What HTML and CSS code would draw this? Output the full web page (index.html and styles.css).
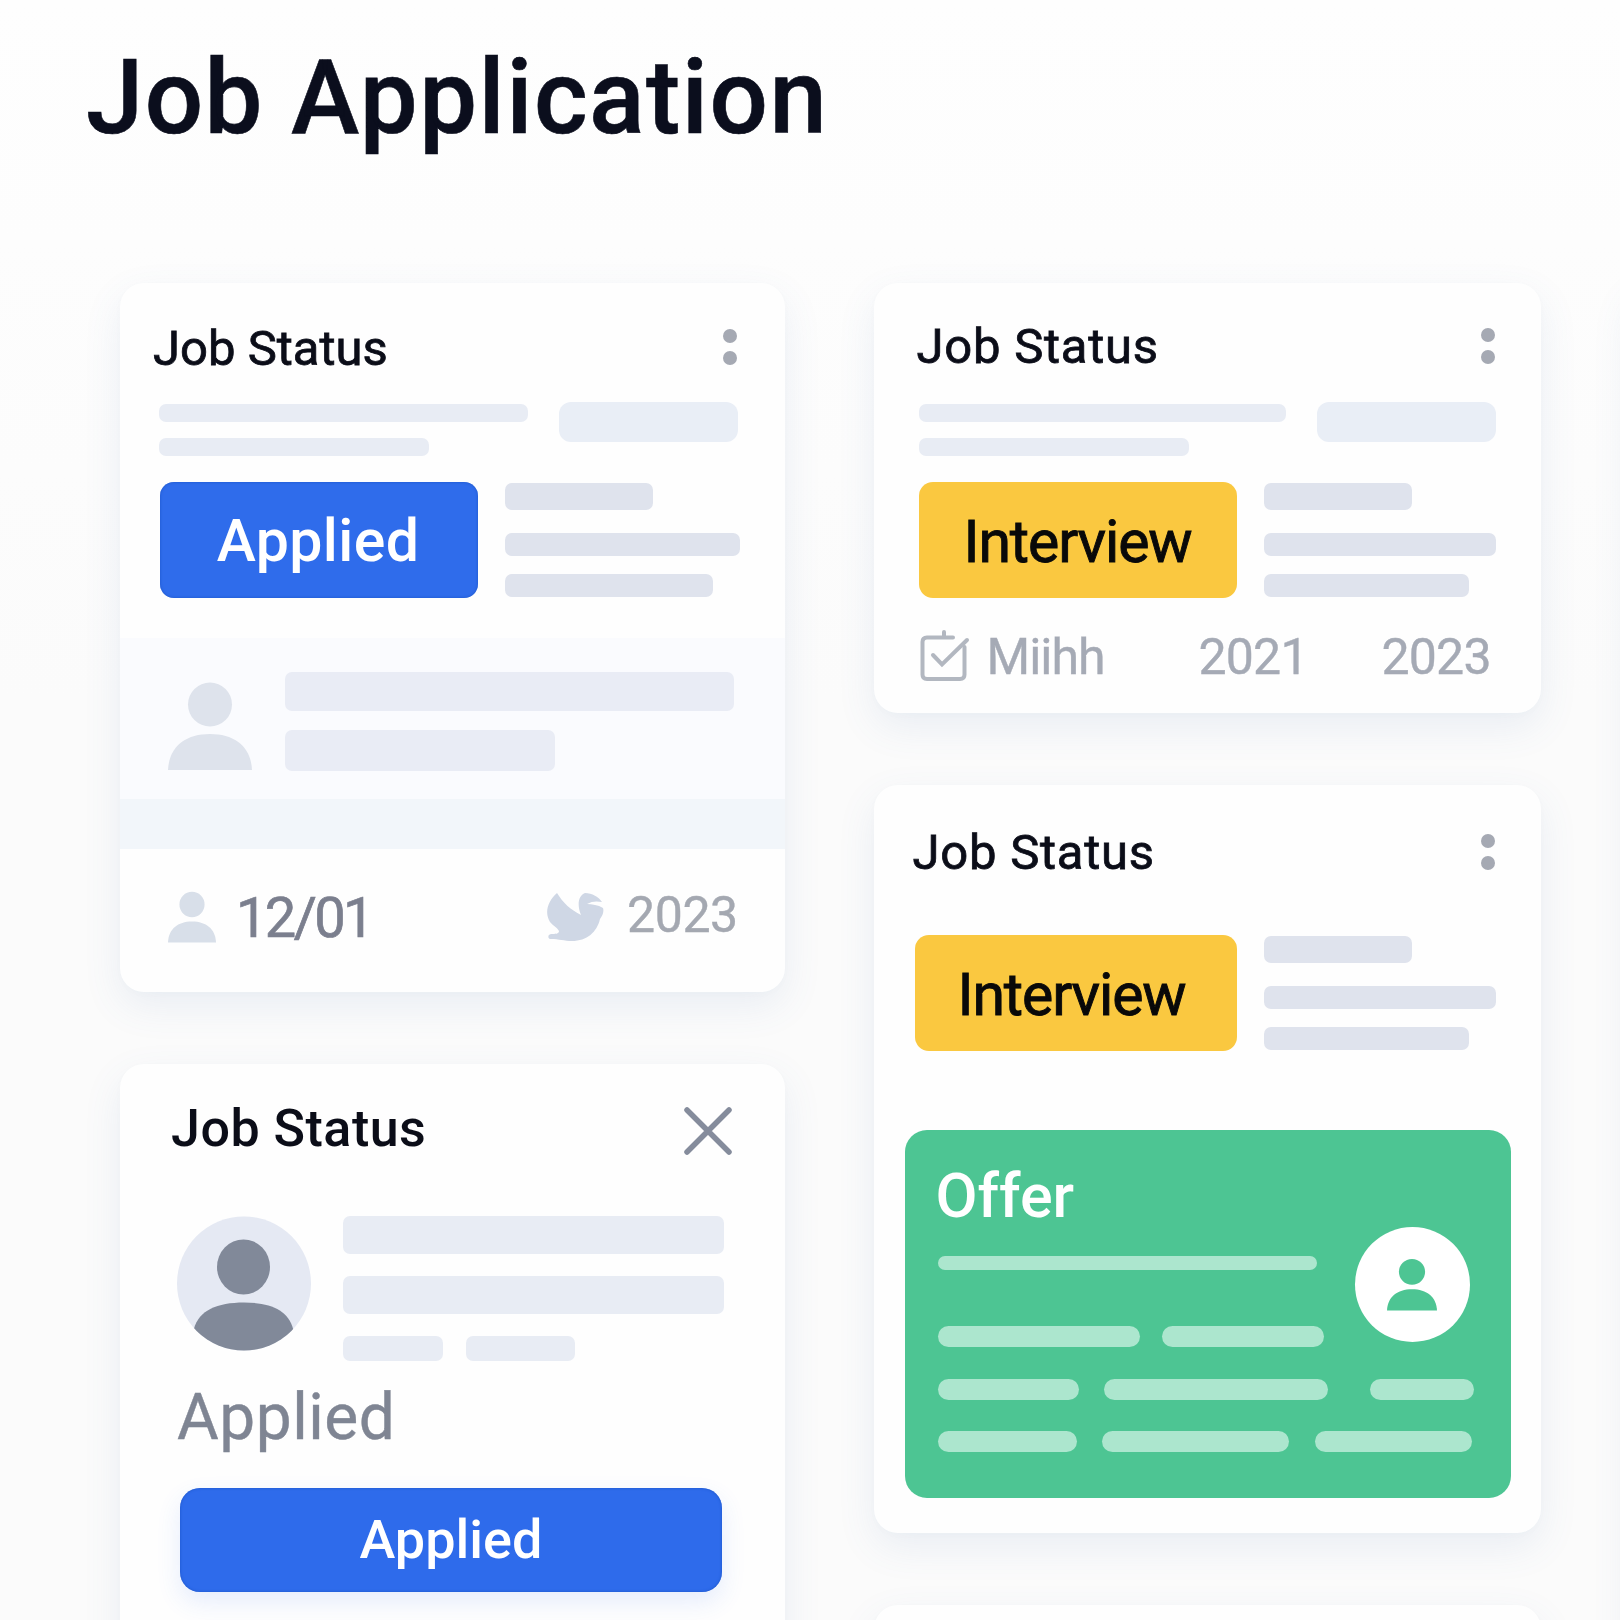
FILE: index.html
```html
<!DOCTYPE html>
<html lang="en">
<head>
<meta charset="utf-8">
<title>Job Application</title>
<link rel="stylesheet" href="styles.css">
</head>
<body>
<svg class="defs" aria-hidden="true">
  <symbol id="person" viewBox="0 0 84 90" preserveAspectRatio="none"><circle cx="42" cy="23.500" r="22"/><path d="M0 89C1 66 17 53 42 53s41 13 42 36z"/></symbol>
</svg>
<main class="page">
  <h1 class="page-title">Job Application</h1>
  <div class="board">
    <div class="column">
      <article class="card card-profile">
        <header class="card-head"><h2>Job Status</h2><span class="dots"><i></i><i></i></span></header>
        <div class="summary">
          <div class="summary-lines"><span class="bar line-long"></span><span class="bar line-short"></span></div>
          <span class="chip"></span>
        </div>
        <div class="status">
          <span class="badge badge-blue">Applied</span>
          <div class="meta"><span class="bar"></span><span class="bar"></span><span class="bar"></span></div>
        </div>
        <div class="contact">
          <svg class="contact-icon"><use href="#person"/></svg>
          <div class="contact-lines"><span class="bar"></span><span class="bar"></span></div>
        </div>
        <div class="strip"></div>
        <footer class="dates">
          <svg class="small-person"><use href="#person"/></svg>
          <span class="date">12/01</span>
          <svg class="bird" viewBox="0 0 58 50"><path d="M11 1C2 9-2 20 4 30c3 4 7 5 9 9 0 3-4 3-8 3-4 1-3 5 0 5 8 0 13 2 21 2 15 0 25-9 28-22 3-4 4-8 3-11-5-3-11-4-16-4 5-3 10-3 15-2C53 5 46 1 39 1c-7 3-8 12-4 22C25 18 17 11 11 1z"/></svg>
          <span class="year">2023</span>
        </footer>
      </article>

      <article class="card card-applied">
        <header class="card-head"><h2>Job Status</h2>
          <svg class="close" viewBox="0 0 50 50"><path d="M4 4l42 42M46 4L4 46"/></svg></header>
        <div class="profile">
          <svg class="avatar" viewBox="0 0 134 134"><clipPath id="round"><circle cx="67" cy="67" r="67"/></clipPath><circle class="disc" cx="67" cy="67" r="67"/><g clip-path="url(#round)"><ellipse cx="66.500" cy="50.500" rx="26.500" ry="27.500"/><path d="M17 112c5-18 23-26 50-26s44 8 49 26v30H17z"/></g></svg>
          <div class="profile-lines"><span class="bar"></span><span class="bar"></span><div class="tags"><span class="bar"></span><span class="bar"></span></div></div>
        </div>
        <p class="state">Applied</p>
        <button class="action">Applied</button>
      </article>
    </div>

    <div class="column">
      <article class="card card-interview">
        <header class="card-head"><h2>Job Status</h2><span class="dots"><i></i><i></i></span></header>
        <div class="summary">
          <div class="summary-lines"><span class="bar line-long"></span><span class="bar line-short"></span></div>
          <span class="chip"></span>
        </div>
        <div class="status">
          <span class="badge badge-yellow">Interview</span>
          <div class="meta"><span class="bar"></span><span class="bar"></span><span class="bar"></span></div>
        </div>
        <footer class="history">
          <svg class="check" viewBox="0 0 50 52"><path d="M33 7.500H7q-4.500 0-4.500 4.500v32.500Q2.500 49 7 49h33q4.500 0 4.500-4.500V17M24 6V2"/><path d="M13 25l9 9.500L47 10"/></svg>
          <span class="name">Miihh</span><span class="from">2021</span><span class="to">2023</span>
        </footer>
      </article>

      <article class="card card-offer">
        <header class="card-head"><h2>Job Status</h2><span class="dots"><i></i><i></i></span></header>
        <div class="status">
          <span class="badge badge-yellow">Interview</span>
          <div class="meta"><span class="bar"></span><span class="bar"></span><span class="bar"></span></div>
        </div>
        <section class="offer">
          <h3>Offer</h3>
          <div class="offer-top">
            <div class="offer-lines"><span class="tick thin"></span><div class="ticks row-a"><span class="tick"></span><span class="tick"></span></div></div>
            <span class="offer-avatar"><svg><use href="#person"/></svg></span>
          </div>
          <div class="ticks row-b"><span class="tick"></span><span class="tick"></span><span class="tick"></span></div>
          <div class="ticks row-c"><span class="tick"></span><span class="tick"></span><span class="tick"></span></div>
        </section>
      </article>
      <article class="card card-next"></article>
    </div>

    <div class="column"><article class="card card-side"></article></div>
  </div>
</main>
</body>
</html>
```
FILE: styles.css
```css
* { box-sizing: border-box; }
body { margin: 0; background: #fdfdfd; font-family: Roboto, "Liberation Sans", sans-serif; color: #0b0d18; }
h1, h2, h3, p { margin: 0; font-weight: 500; white-space: nowrap; }
svg { display: block; flex: none; }
.defs { width: 0; height: 0; position: absolute; }
.page { width: 1620px; height: 1620px; overflow: hidden; background: linear-gradient(#fefefe 0, #fdfdfd 240px, #fbfbfb 700px, #fbfbfb 100%); }
.page-title { padding: 38px 0 0 86px; height: 283px; font-size: 103px; line-height: 120px; letter-spacing: 1.450px; color: #0b0e1d; -webkit-text-stroke: .6px currentColor; }

.board { display: grid; grid-template-columns: 665px 667px 665px; column-gap: 88.500px; padding-left: 120px; }
.column { display: flex; flex-direction: column; gap: 72px; }
.card { flex: none; background: #fefefe; border-radius: 24px; box-shadow: 0 14px 38px rgba(80, 120, 175, .1), 0 2px 8px rgba(80, 110, 150, .015); }

.card-head { display: flex; align-items: center; justify-content: space-between; height: 60px; }
.card-head h2 { padding-top: 2px; font-size: 49px; line-height: 60px; font-weight: 400; -webkit-text-stroke: .8px currentColor; }
.dots { display: flex; flex-direction: column; gap: 8px; }
.dots i { width: 14px; height: 14px; border-radius: 50%; background: #a5a9b3; }

.bar { display: block; background: #e8ecf4; border-radius: 7px; }
.summary { display: flex; justify-content: space-between; height: 40px; }
.summary-lines { padding-top: 2px; }
.line-long { width: 369px; height: 18px; }
.line-short { width: 270px; height: 18px; margin-top: 16px; }
.chip { width: 179px; height: 40px; border-radius: 12px; background: #e9eef6; }

.status { display: flex; height: 116px; }
.badge { display: flex; align-items: center; justify-content: center; width: 318px; height: 116px; border-radius: 14px; font-size: 59px; }
.badge-blue { padding-right: 2px; background: #2f6ceb; color: #fff; font-weight: 500; letter-spacing: .4px; box-shadow: inset 0 0 3px #1c54c5; }
.badge-yellow { padding-top: 2px; background: #fac840; color: #090909; letter-spacing: -1.150px; -webkit-text-stroke: .9px currentColor; }
.meta { padding-top: 1px; margin-left: 27px; }
.meta .bar { background: #dfe3ed; }
.meta .bar:nth-child(1) { width: 148px; height: 27px; }
.meta .bar:nth-child(2) { width: 235px; height: 23px; margin-top: 23px; }
.meta .bar:nth-child(3) { width: 208px; height: 23px; margin-top: 18px; }

.card-profile { height: 709px; padding-top: 35px; }
.card-profile .card-head { padding: 0 48px 0 33px; margin-bottom: 24px; }
.card-profile .dots { margin-top: -3px; }
.card-profile .summary { padding: 0 47px 0 39px; margin-bottom: 40px; }
.card-profile .status { padding-left: 40px; margin-bottom: 40px; }
.contact { display: flex; height: 161px; padding: 34px 0 0 48px; background: #fafbfe; }
.contact-icon { width: 84px; height: 90px; margin-top: 9px; fill: #dee3ec; }
.contact-lines { margin-left: 33px; }
.contact-lines .bar { width: 449px; height: 39px; background: #e9ecf5; }
.contact-lines .bar + .bar { width: 270px; height: 41px; margin-top: 19px; }
.strip { height: 50px; background: #f2f6fa; }
.dates { display: flex; align-items: center; padding: 38px 0 0 48px; color: #a4a8b1; }
.small-person { width: 48px; height: 52px; fill: #d8dfe9; }
.date { width: 310px; margin-left: 20px; padding-top: 3px; font-size: 56px; line-height: 56px; letter-spacing: -2.600px; color: #7b7f8e; -webkit-text-stroke: .7px currentColor; }
.bird { width: 58px; height: 50px; fill: #cfd7e5; }
.year { margin: -4px 0 0 23px; font-size: 50px; line-height: 50px; letter-spacing: -.400px; -webkit-text-stroke: .4px currentColor; }

.card-applied { height: 650px; padding-top: 34px; }
.card-applied .card-head { padding: 0 52px 0 51px; }
.card-applied h2 { padding-top: 1px; font-size: 52px; font-weight: 500; letter-spacing: .500px; -webkit-text-stroke: 0; }
.close { width: 50px; height: 50px; margin-top: 5px; fill: none; stroke: #858c9c; stroke-width: 5.500; stroke-linecap: round; }
.profile { display: flex; height: 145px; margin: 58px 0 0 57px; }
.avatar { width: 134px; height: 135px; fill: #818999; }
.disc { fill: #e5e9f3; }
.profile-lines { margin-left: 32px; }
.profile-lines .bar { width: 381px; height: 38px; margin-bottom: 22px; }
.tags { display: flex; gap: 23px; }
.tags .bar { width: 100px; height: 25px; }
.tags .bar + .bar { width: 109px; }
.state { height: 107px; margin: 20px 0 0 57px; font-size: 64px; line-height: 74px; font-weight: 400; letter-spacing: .500px; color: #7f8593; -webkit-text-stroke: .4px currentColor; }
.action { display: block; width: 542px; height: 104px; margin: 0 0 0 60px; padding: 0 0 2px; border: 0; border-radius: 20px; background: #2e6beb; color: #fff; font: 500 54px Roboto, sans-serif; box-shadow: inset 0 0 3px #1c54c5, 0 10px 24px rgba(47, 108, 235, .12); }

.column:nth-child(2) h2 { letter-spacing: .750px; }
.column:nth-child(2) .meta .bar:nth-child(2) { width: 232px; }
.column:nth-child(2) .meta .bar:nth-child(3) { width: 205px; }
.card-interview { height: 430px; padding-top: 33px; }
.card-interview .card-head { padding: 0 46px 0 43px; margin-bottom: 26px; }
.card-interview .summary { padding: 0 45px 0 45px; margin-bottom: 40px; }
.card-interview .line-long { width: 367px; }
.card-interview .status { padding-left: 45px; }
.history { display: flex; align-items: center; padding: 31px 0 0 46px; color: #a5aab5; font-size: 50px; line-height: 52px; letter-spacing: -.800px; -webkit-text-stroke: .4px currentColor; }
.history span { padding-top: 2px; }
.check { width: 50px; height: 52px; fill: none; stroke: #b2b7c0; stroke-width: 4; stroke-linecap: round; }
.name { width: 212px; margin-left: 17px; letter-spacing: -1px; }
.from { width: 183px; }

.card-offer { height: 748px; padding-top: 37px; }
.card-offer .card-head { padding: 0 46px 0 39px; margin-bottom: 53px; }
.card-offer .status { padding-left: 41px; }
.card-offer .badge { width: 322px; padding-right: 8px; }
.offer { width: 606px; height: 368px; margin: 79px 0 0 31px; padding: 29px 0 0 33px; border-radius: 22px; background: #4dc593; color: #fff; }
.offer h3 { height: 67px; padding-top: 2px; font-size: 61px; line-height: 70px; margin-left: -2px; }
.offer-top { display: flex; height: 153px; padding-top: 1px; }
.offer-lines { width: 436px; padding-top: 29px; }
.offer-avatar { display: flex; justify-content: center; width: 115px; height: 115px; padding-top: 31px; margin-left: -19px; border-radius: 50%; background: #fff; }
.offer-avatar svg { width: 50px; height: 53px; fill: #4dc593; }
.tick { display: block; height: 21px; border-radius: 11px; background: #ace6ce; }
.thin { width: 379px; height: 14px; }
.ticks { display: flex; }
.row-a { margin-top: 56px; gap: 22px; }
.row-a .tick:nth-child(1) { width: 202px; }
.row-a .tick:nth-child(2) { width: 162px; }
.row-b .tick:nth-child(1) { width: 141px; }
.row-b .tick:nth-child(2) { width: 224px; margin-left: 25px; }
.row-b .tick:nth-child(3) { width: 104px; margin-left: 42px; }
.row-c { margin-top: 31px; }
.row-c .tick:nth-child(1) { width: 139px; }
.row-c .tick:nth-child(2) { width: 187px; margin-left: 25px; }
.row-c .tick:nth-child(3) { width: 157px; margin-left: 26px; }
.card-next { height: 300px; }
.card-side { height: 1500px; }
```
